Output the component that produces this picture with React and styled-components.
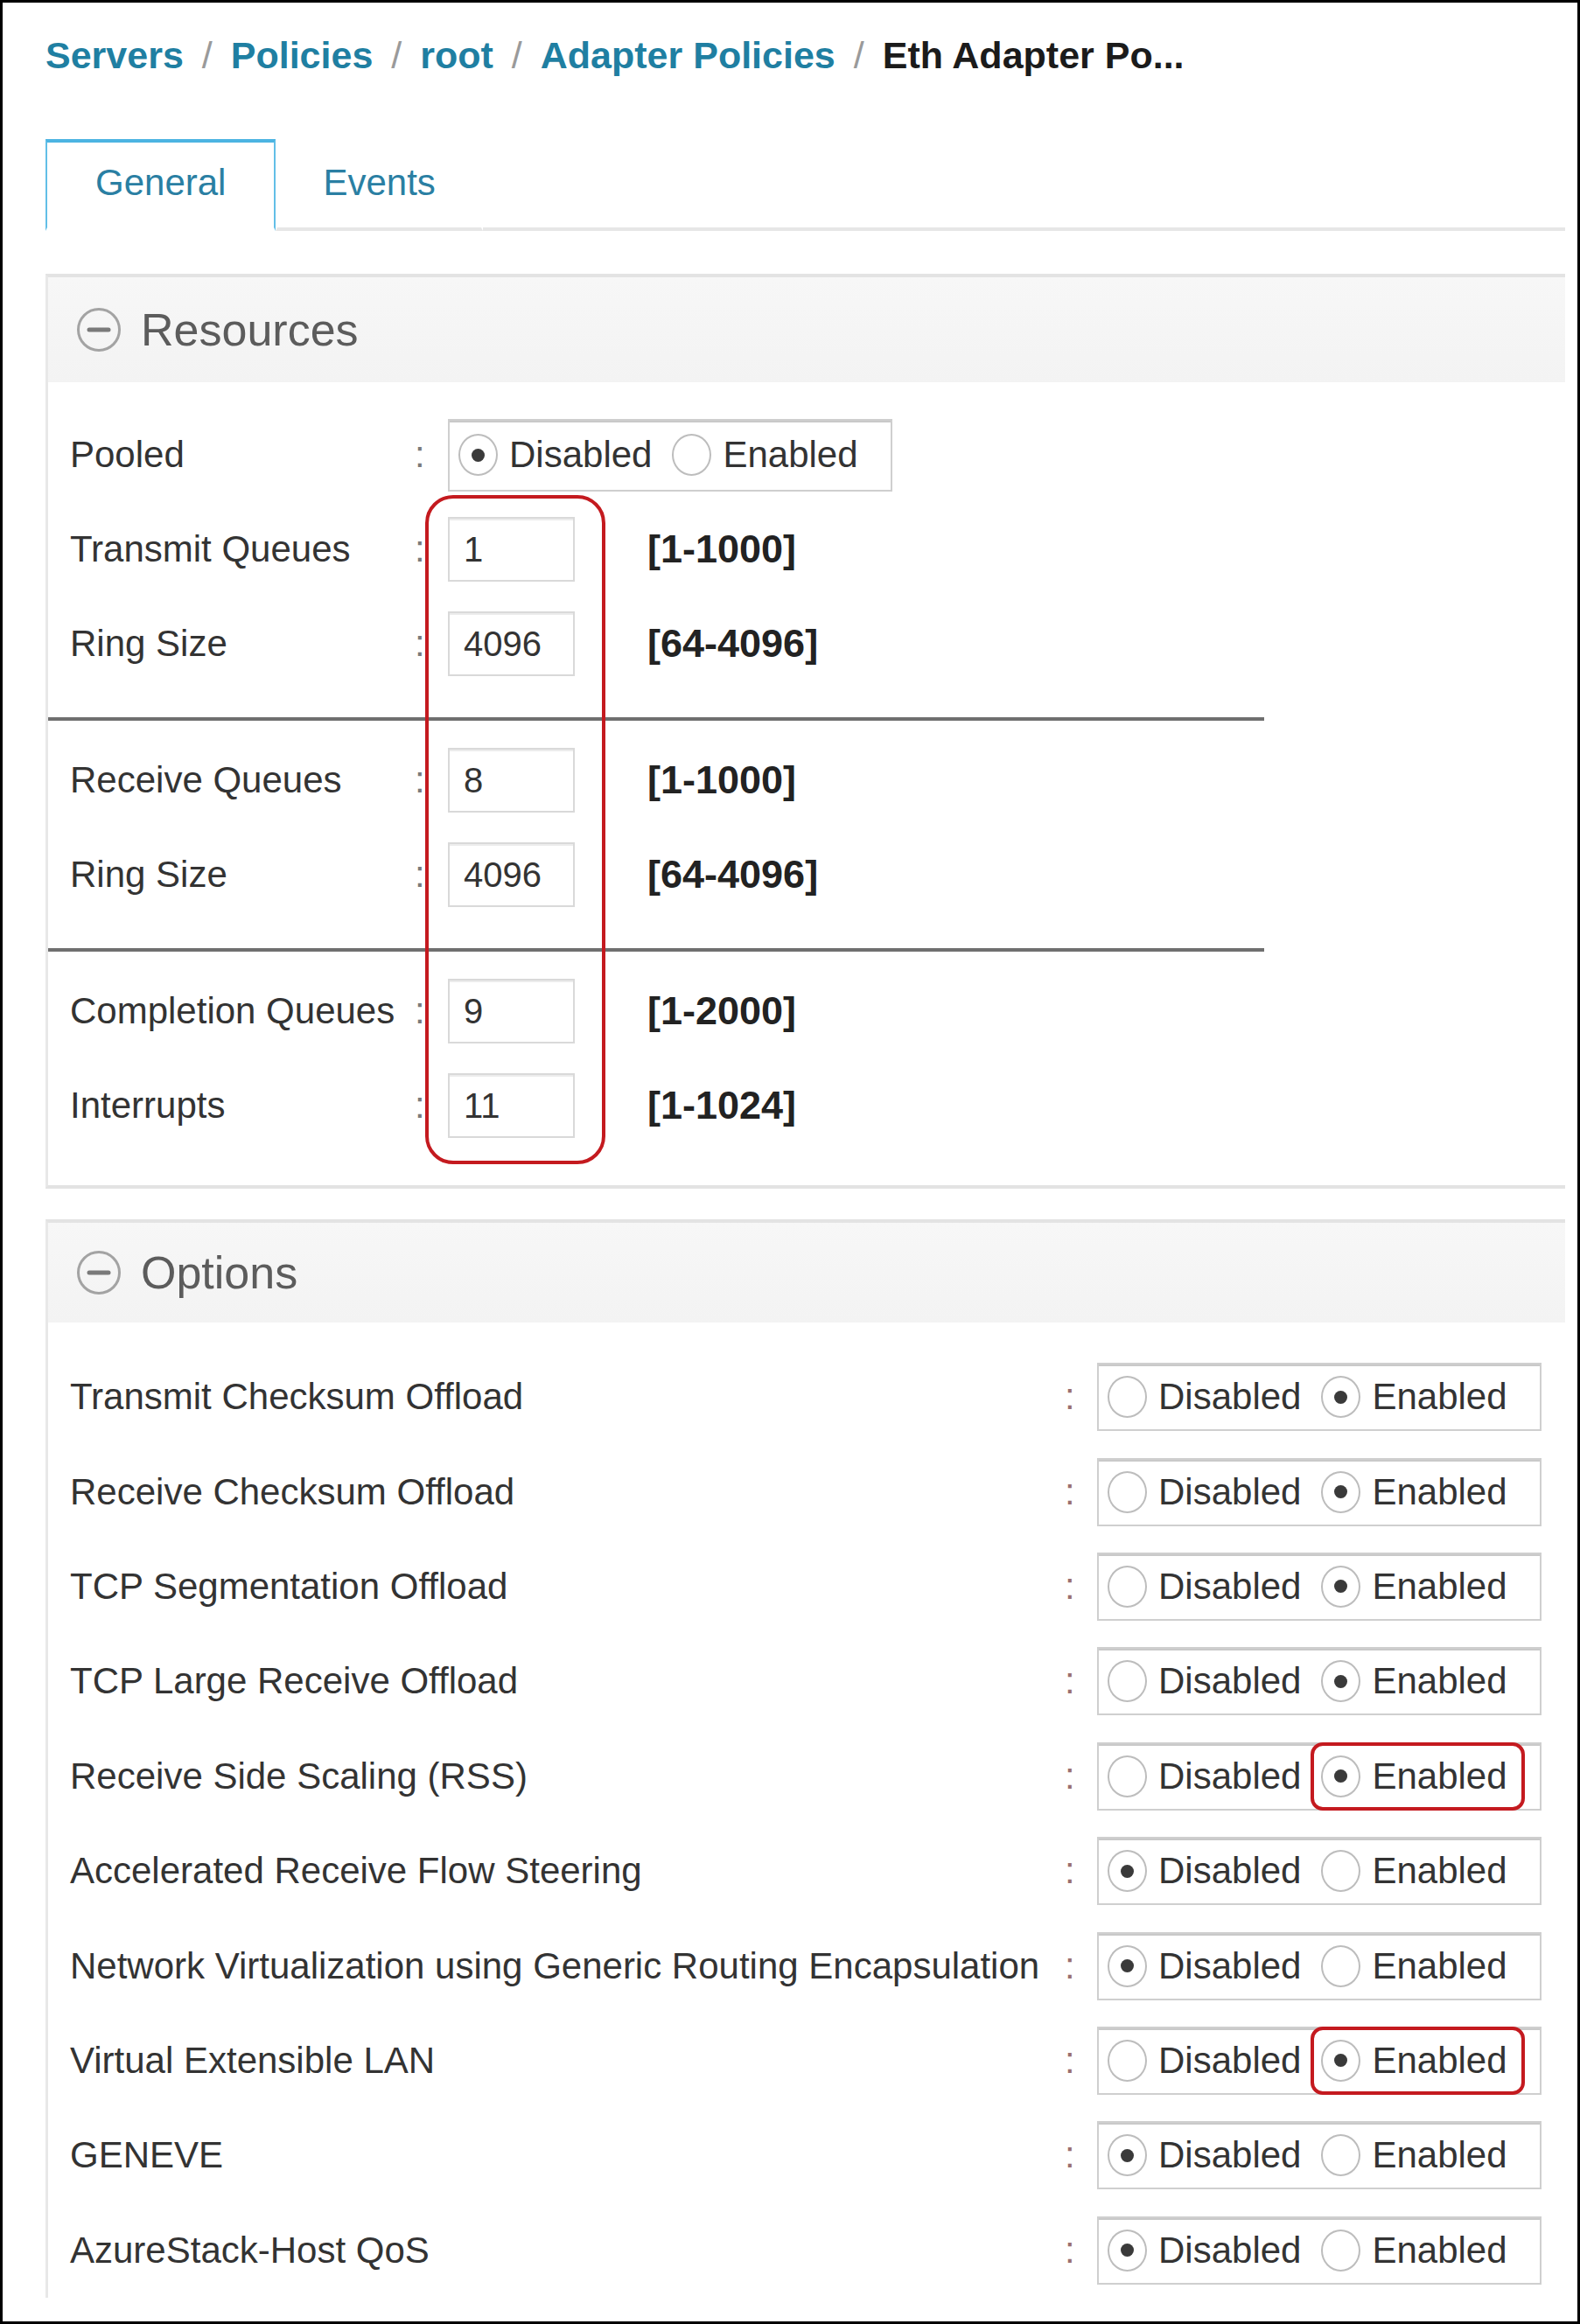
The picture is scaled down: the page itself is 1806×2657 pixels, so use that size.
import styled, { createGlobalStyle } from "styled-components";

const GlobalStyle = createGlobalStyle`
    body {
        margin: 0;
        background: #fff;
        font-family: "Liberation Sans", Arial, Helvetica, sans-serif;
    }
`;

const RED = "#c41a1f";

const S = {
    Frame: styled.div`
        width: 1806px;
        height: 2657px;
        box-sizing: border-box;
        border: 3px solid #000;
        overflow: hidden;
        padding: 0 14px 0 49px;
        background: #fff;
    `,
    Breadcrumb: styled.div`
        display: flex;
        align-items: center;
        height: 60px;
        margin-top: 30px;
        font-size: 43px;
        font-weight: bold;
        white-space: nowrap;
    `,
    Crumb: styled.span`
        color: ${(p) => (p.$current ? "#1b1b1b" : "#1f7fa2")};
    `,
    Slash: styled.span`
        color: #9a9a9a;
        font-weight: normal;
        margin: 0 21px;
    `,
    TabBar: styled.div`
        display: flex;
        align-items: flex-end;
        margin-top: 66px;
    `,
    Tab: styled.div`
        height: 105px;
        box-sizing: border-box;
        display: flex;
        align-items: center;
        padding: 0 ${(p) => (p.$active ? "55px" : "52px")} 6px;
        font-size: 42px;
        color: #2a7fa3;
        border-top: 4px solid ${(p) => (p.$active ? "#4cb4e2" : "transparent")};
        border-left: 2px solid ${(p) => (p.$active ? "#62bfe7" : "transparent")};
        border-right: 2px solid ${(p) => (p.$active ? "#62bfe7" : "transparent")};
        border-bottom: 4px solid ${(p) => (p.$active ? "transparent" : "#e6e6e6")};
    `,
    TabFill: styled.div`
        flex: 1;
        border-bottom: 4px solid #e6e6e6;
    `,
    Panel: styled.section`
        margin-top: ${(p) => p.$top}px;
        border-top: 4px solid #e3e3e3;
        border-left: 3px solid #e8e8e8;
        border-bottom: ${(p) => (p.$open ? "none" : "4px solid #e3e3e3")};
    `,
    PanelHeader: styled.div`
        height: ${(p) => p.$h}px;
        display: flex;
        align-items: center;
        gap: 22px;
        padding-left: 32px;
        background: linear-gradient(#f7f7f7, #f3f3f3);
        font-size: 52px;
        color: #5c5c5c;
    `,
    PanelBody: styled.div`
        position: relative;
        padding: ${(p) => p.$pad};
    `,
    ResRow: styled.div`
        display: grid;
        grid-template-columns: 392px 40px 145px 83px auto;
        align-items: center;
        height: 108px;
    `,
    OptRow: styled.div`
        display: grid;
        grid-template-columns: 1135px 39px auto;
        align-items: center;
        height: 108.4px;
    `,
    Label: styled.div`
        font-size: 42px;
        color: #333;
        white-space: nowrap;
    `,
    Colon: styled.div`
        font-size: 42px;
        color: ${(p) => p.$tone || "#7a7a7a"};
        padding-left: 2px;
    `,
    ValueBox: styled.div`
        height: 74px;
        box-sizing: border-box;
        display: flex;
        align-items: center;
        padding-left: 16px;
        border: 2px solid #d9d9d9;
        box-shadow: inset 0 2px 0 #ececec;
        font-size: 40px;
        color: #333;
    `,
    Range: styled.div`
        grid-column: 5;
        font-size: 45px;
        font-weight: bold;
        color: #222;
    `,
    Divider: styled.div`
        width: 1390px;
        height: 4px;
        margin: 30px 0 14px -25px;
        background: #6f6f6f;
    `,
    Callout: styled.div`
        position: absolute;
        left: 431px;
        top: 129px;
        width: 206px;
        height: 765px;
        box-sizing: border-box;
        border: 4px solid ${RED};
        border-radius: 32px;
        pointer-events: none;
    `,
    RadioBox: styled.div`
        grid-column: ${(p) => p.$col || "auto"};
        justify-self: start;
        height: ${(p) => p.$h}px;
        box-sizing: border-box;
        display: inline-flex;
        align-items: center;
        gap: 23px;
        padding: 0 37px 0 10px;
        border: 2px solid #cfcfcf;
        box-shadow: inset 0 2px 0 #c9c9c9;
    `,
    Option: styled.div`
        position: relative;
        display: inline-flex;
        align-items: center;
        gap: 13px;
        font-size: 42px;
        color: #333;

        &::after {
            content: "";
            display: ${(p) => (p.$marked ? "block" : "none")};
            position: absolute;
            left: -12px;
            right: -20px;
            top: calc(50% - 39px);
            height: 78px;
            border: 4px solid ${RED};
            border-radius: 14px;
            box-sizing: border-box;
        }
    `,
    Circle: styled.span`
        width: 45px;
        height: 48px;
        box-sizing: border-box;
        border: 2px solid #bdbdbd;
        border-radius: 50%;
        display: flex;
        align-items: center;
        justify-content: center;

        &::before {
            content: "";
            display: ${(p) => (p.$on ? "block" : "none")};
            width: 15px;
            height: 15px;
            border-radius: 50%;
            background: #3a3a3a;
        }
    `,
};

function MinusCircle() {
    return (
        <svg width="52" height="52" viewBox="0 0 52 52">
            <circle cx="26" cy="26" r="23.5" fill="none" stroke="#a3a3a3" strokeWidth="3" />
            <line x1="15" y1="26" x2="37" y2="26" stroke="#7a7a7a" strokeWidth="5" strokeLinecap="round" />
        </svg>
    );
}

function Radio({ value, mark, col, h }) {
    return (
        <S.RadioBox $col={col} $h={h}>
            <S.Option>
                <S.Circle $on={value === "Disabled"} />
                Disabled
            </S.Option>
            <S.Option $marked={mark}>
                <S.Circle $on={value === "Enabled"} />
                Enabled
            </S.Option>
        </S.RadioBox>
    );
}

const crumbs = ["Servers", "Policies", "root", "Adapter Policies"];

const groups = [
    [
        ["Transmit Queues", "1", "[1-1000]"],
        ["Ring Size", "4096", "[64-4096]"],
    ],
    [
        ["Receive Queues", "8", "[1-1000]"],
        ["Ring Size", "4096", "[64-4096]"],
    ],
    [
        ["Completion Queues", "9", "[1-2000]"],
        ["Interrupts", "11", "[1-1024]"],
    ],
];

const options = [
    ["Transmit Checksum Offload", "Enabled"],
    ["Receive Checksum Offload", "Enabled"],
    ["TCP Segmentation Offload", "Enabled"],
    ["TCP Large Receive Offload", "Enabled"],
    ["Receive Side Scaling (RSS)", "Enabled", true],
    ["Accelerated Receive Flow Steering", "Disabled"],
    ["Network Virtualization using Generic Routing Encapsulation", "Disabled"],
    ["Virtual Extensible LAN", "Enabled", true],
    ["GENEVE", "Disabled"],
    ["AzureStack-Host QoS", "Disabled"],
];

export default function App() {
    return (
        <>
            <GlobalStyle />
            <S.Frame>
                <S.Breadcrumb>
                    {crumbs.map((c) => (
                        <span key={c}>
                            <S.Crumb>{c}</S.Crumb>
                            <S.Slash>/</S.Slash>
                        </span>
                    ))}
                    <S.Crumb $current>Eth Adapter Po...</S.Crumb>
                </S.Breadcrumb>

                <S.TabBar>
                    <S.Tab $active>General</S.Tab>
                    <S.Tab>Events</S.Tab>
                    <S.TabFill />
                </S.TabBar>

                <S.Panel $top={49}>
                    <S.PanelHeader $h={120}>
                        <MinusCircle />
                        Resources
                    </S.PanelHeader>
                    <S.PanelBody $pad="29px 0 37px 25px">
                        <S.ResRow>
                            <S.Label>Pooled</S.Label>
                            <S.Colon>:</S.Colon>
                            <Radio value="Disabled" col="3 / 6" h={83} />
                        </S.ResRow>
                        {groups.map((rows, gi) => (
                            <div key={gi}>
                                {gi > 0 && <S.Divider />}
                                {rows.map(([label, val, range], ri) => (
                                    <S.ResRow key={ri}>
                                        <S.Label>{label}</S.Label>
                                        <S.Colon>:</S.Colon>
                                        <S.ValueBox>{val}</S.ValueBox>
                                        <S.Range>{range}</S.Range>
                                    </S.ResRow>
                                ))}
                            </div>
                        ))}
                        <S.Callout />
                    </S.PanelBody>
                </S.Panel>

                <S.Panel $top={35} $open>
                    <S.PanelHeader $h={114}>
                        <MinusCircle />
                        Options
                    </S.PanelHeader>
                    <S.PanelBody $pad="31px 0 0 25px">
                        {options.map(([label, val, mark]) => (
                            <S.OptRow key={label}>
                                <S.Label>{label}</S.Label>
                                <S.Colon $tone="#9a6f6f">:</S.Colon>
                                <Radio value={val} mark={mark} h={78} />
                            </S.OptRow>
                        ))}
                    </S.PanelBody>
                </S.Panel>
            </S.Frame>
        </>
    );
}
